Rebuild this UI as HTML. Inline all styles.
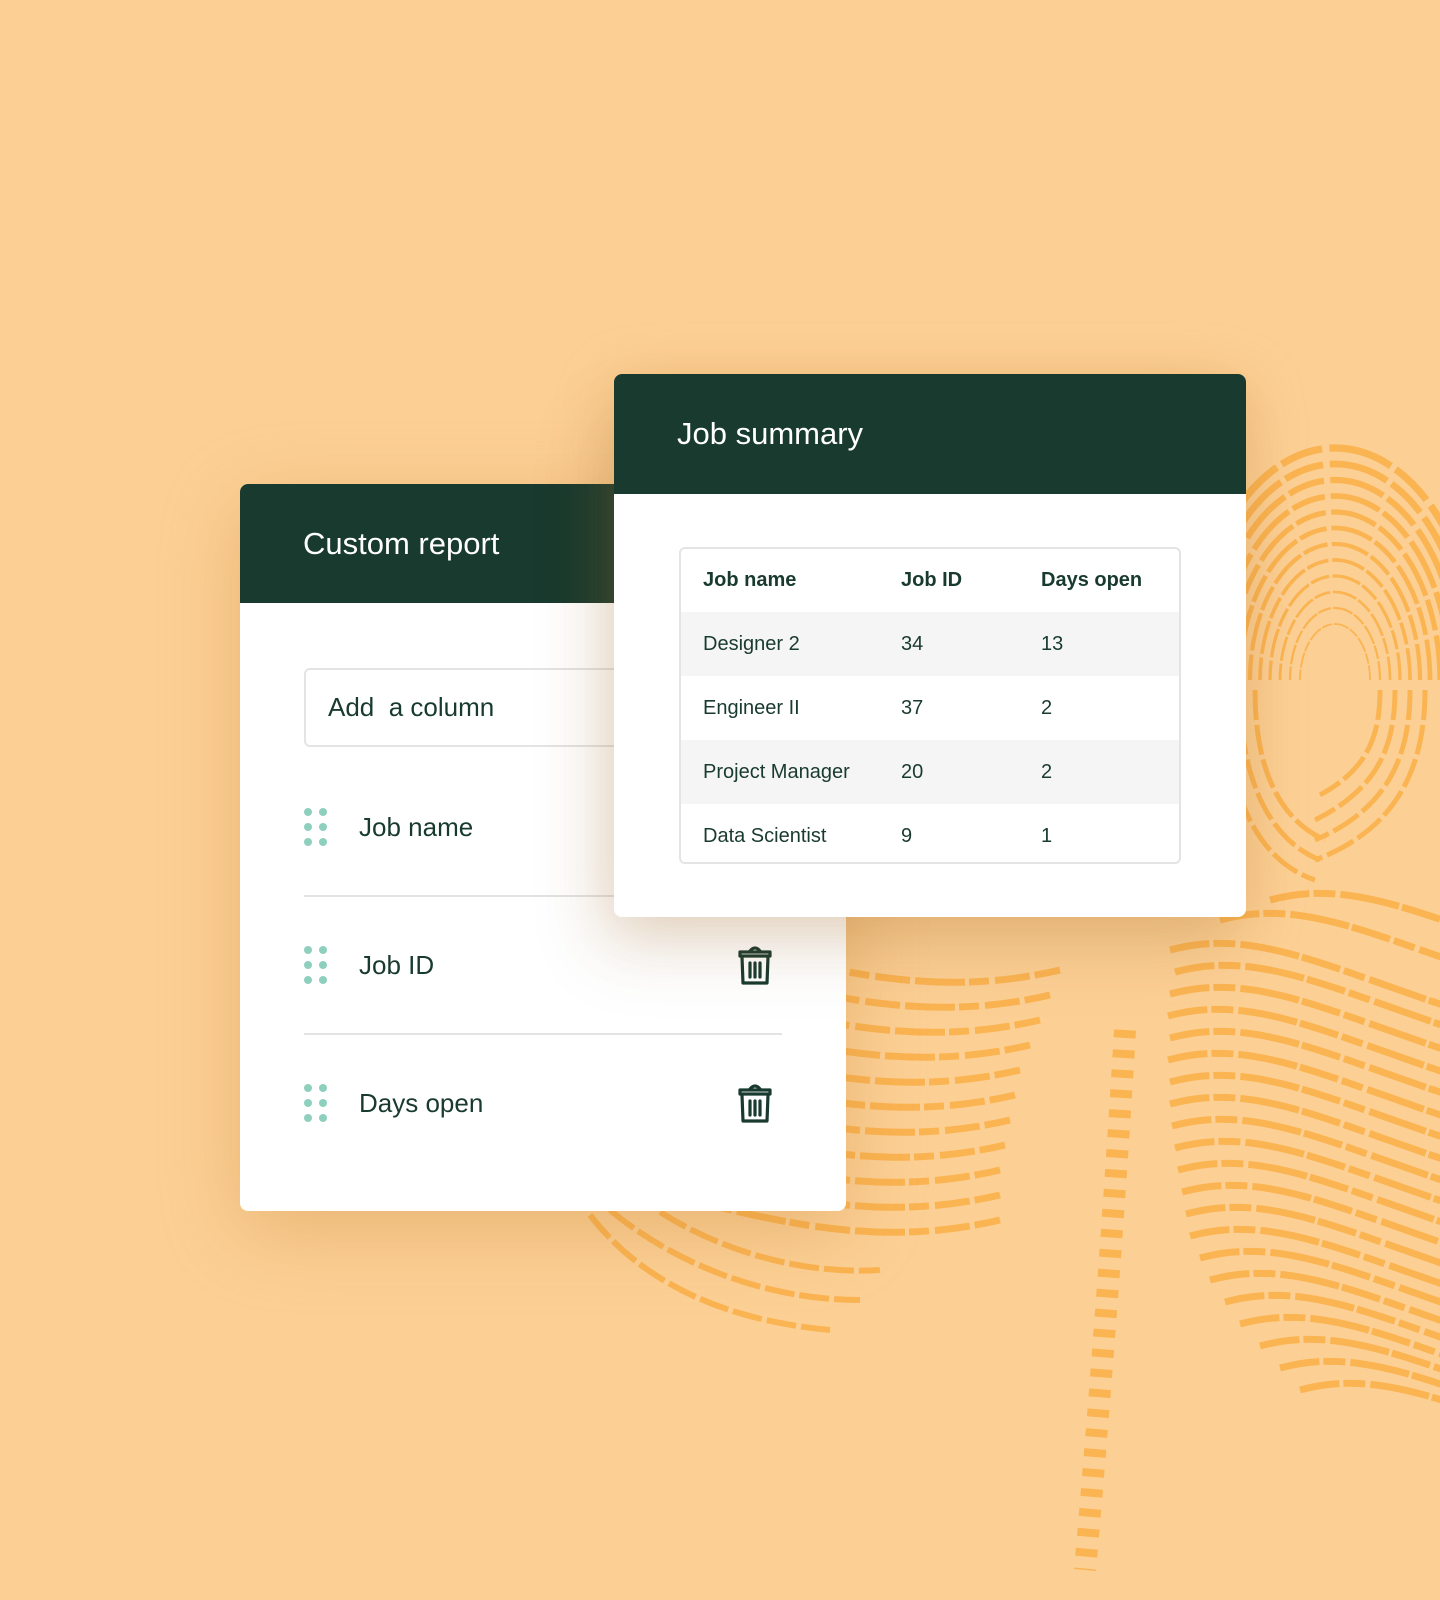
<!DOCTYPE html>
<html><head><meta charset="utf-8"><style>
*{margin:0;padding:0;box-sizing:border-box}
body{width:1440px;height:1600px;background:#FCD095;position:relative;overflow:hidden;font-family:"Liberation Sans",sans-serif;color:#193A2F}
svg.bg{position:absolute;left:0;top:0}
.card{position:absolute;background:#fff;border-radius:8px;overflow:hidden;box-shadow:0 20px 80px rgba(190,120,40,.3)}
.hdr{background:#193A2E;color:#fff;font-size:31px;position:relative}
.hdr span{position:absolute;left:63px;top:50%;transform:translateY(-50%)}
.dots{position:absolute;width:24px;height:40px}
.dots i{position:absolute;width:8px;height:8px;border-radius:50%;background:#8ED0BD}
.lbl{position:absolute;font-size:26px}
.div{position:absolute;height:2px;background:#e3e3e3}
table{border-collapse:collapse;width:100%}
td{height:64px;font-size:20px;padding-left:22px}
th{height:63px;font-size:20px;text-align:left;padding-left:22px;font-weight:bold}
tr.g td{background:#F4F5F4}
</style></head><body>
<svg class="bg" width="1440" height="1600" viewBox="0 0 1440 1600">
<defs>
<path id="w" d="M0,0 C90,-25 170,25 320,70" fill="none" stroke="#FBB452" stroke-width="7" stroke-dasharray="40 4 22 5 60 3"/>
<path id="l" d="M0,0 C120,10 250,80 420,40" fill="none" stroke="#FBB452" stroke-width="7" stroke-dasharray="35 5 50 4 20 6"/>
<path id="a" d="M-100,0 A100,160 0 0 1 100,0" fill="none" stroke="#FBB452" stroke-width="5" stroke-dasharray="30 5 45 4"/>
</defs>
<g>
<use href="#w" x="1170" y="950"/><use href="#w" x="1175" y="972"/><use href="#w" x="1170" y="994"/><use href="#w" x="1168" y="1016"/><use href="#w" x="1170" y="1038"/><use href="#w" x="1168" y="1060"/><use href="#w" x="1170" y="1082"/><use href="#w" x="1170" y="1104"/><use href="#w" x="1172" y="1126"/><use href="#w" x="1175" y="1148"/><use href="#w" x="1178" y="1170"/><use href="#w" x="1182" y="1192"/><use href="#w" x="1186" y="1214"/><use href="#w" x="1190" y="1236"/><use href="#w" x="1200" y="1258"/><use href="#w" x="1210" y="1280"/><use href="#w" x="1225" y="1302"/><use href="#w" x="1240" y="1324"/><use href="#w" x="1260" y="1346"/><use href="#w" x="1280" y="1368"/><use href="#w" x="1300" y="1390"/>
<use href="#w" x="1220" y="920"/><use href="#w" x="1270" y="900"/>
</g>
<g>
<use href="#l" x="640" y="930"/><use href="#l" x="630" y="955"/><use href="#l" x="620" y="980"/><use href="#l" x="610" y="1005"/><use href="#l" x="600" y="1030"/><use href="#l" x="595" y="1055"/><use href="#l" x="590" y="1080"/><use href="#l" x="585" y="1105"/><use href="#l" x="580" y="1130"/><use href="#l" x="580" y="1155"/><use href="#l" x="580" y="1180"/>
</g>
<g>
<path d="M590,1215 C640,1280 720,1320 830,1330" fill="none" stroke="#FBB452" stroke-width="6" stroke-dasharray="30 5"/>
<path d="M610,1210 C670,1260 760,1300 860,1300" fill="none" stroke="#FBB452" stroke-width="6" stroke-dasharray="30 5"/>
<path d="M660,1212 C720,1250 800,1275 880,1270" fill="none" stroke="#FBB452" stroke-width="6" stroke-dasharray="30 5"/>
</g>
<path d="M1125,1030 C1115,1200 1100,1400 1085,1570" fill="none" stroke="#FBB452" stroke-width="22" stroke-dasharray="8 12"/>
<g transform="translate(1335,680)">
<use href="#a" transform="scale(0.35)"/><use href="#a" transform="scale(0.45)"/><use href="#a" transform="scale(0.55)"/><use href="#a" transform="scale(0.65)"/><use href="#a" transform="scale(0.75)"/><use href="#a" transform="scale(0.85)"/><use href="#a" transform="scale(0.95)"/><use href="#a" transform="scale(1.05)"/><use href="#a" transform="scale(1.15)"/><use href="#a" transform="scale(1.25)"/><use href="#a" transform="scale(1.35)"/><use href="#a" transform="scale(1.45)"/>
<path d="M-110,10 C-110,110 -80,180 -20,200" fill="none" stroke="#FBB452" stroke-width="5" stroke-dasharray="30 5"/>
<path d="M-95,10 C-95,100 -65,160 -15,180" fill="none" stroke="#FBB452" stroke-width="5" stroke-dasharray="30 5"/>
<path d="M-80,10 C-80,90 -55,140 -10,160" fill="none" stroke="#FBB452" stroke-width="5" stroke-dasharray="30 5"/>
<path d="M90,10 C90,90 60,150 -20,180" fill="none" stroke="#FBB452" stroke-width="5" stroke-dasharray="30 5"/>
<path d="M75,10 C75,80 50,130 -20,160" fill="none" stroke="#FBB452" stroke-width="5" stroke-dasharray="30 5"/>
<path d="M60,10 C60,70 40,110 -20,140" fill="none" stroke="#FBB452" stroke-width="5" stroke-dasharray="30 5"/>
<path d="M45,10 C45,60 30,90 -15,115" fill="none" stroke="#FBB452" stroke-width="5" stroke-dasharray="30 5"/>
</g>
</svg>

<div class="card" style="left:240px;top:484px;width:606px;height:727px">
<div class="hdr" style="height:119px"><span>Custom report</span></div>
<div style="position:absolute;left:64px;top:184px;width:600px;height:79px;border:2px solid #e4e4e4;border-radius:6px"></div>
<div class="lbl" style="left:88px;top:208px">Add&nbsp; a column</div>
<div class="dots" style="left:64px;top:324px"><i style="left:0;top:0"></i><i style="left:15px;top:0"></i><i style="left:0;top:15px"></i><i style="left:15px;top:15px"></i><i style="left:0;top:30px"></i><i style="left:15px;top:30px"></i></div>
<div class="lbl" style="left:119px;top:328px">Job name</div>
<div class="div" style="left:64px;top:411px;width:478px"></div>
<div class="dots" style="left:64px;top:462px"><i style="left:0;top:0"></i><i style="left:15px;top:0"></i><i style="left:0;top:15px"></i><i style="left:15px;top:15px"></i><i style="left:0;top:30px"></i><i style="left:15px;top:30px"></i></div>
<div class="lbl" style="left:119px;top:466px">Job ID</div>
<div class="div" style="left:64px;top:549px;width:478px"></div>
<div class="dots" style="left:64px;top:600px"><i style="left:0;top:0"></i><i style="left:15px;top:0"></i><i style="left:0;top:15px"></i><i style="left:15px;top:15px"></i><i style="left:0;top:30px"></i><i style="left:15px;top:30px"></i></div>
<div class="lbl" style="left:119px;top:604px">Days open</div>
<svg style="position:absolute;left:497px;top:461px" width="36" height="42" viewBox="0 0 36 42"><g fill="none" stroke="#193A2F" stroke-width="3.2" stroke-linecap="round" stroke-linejoin="round"><path d="M13,6 Q18,0 23,6"/><path d="M3,7 H33 V11 H3 Z"/><path d="M5,12 L6,38 H30 L31,12"/><path d="M13,18 V32 M18,18 V32 M23,18 V32"/></g></svg>
<svg style="position:absolute;left:497px;top:599px" width="36" height="42" viewBox="0 0 36 42"><g fill="none" stroke="#193A2F" stroke-width="3.2" stroke-linecap="round" stroke-linejoin="round"><path d="M13,6 Q18,0 23,6"/><path d="M3,7 H33 V11 H3 Z"/><path d="M5,12 L6,38 H30 L31,12"/><path d="M13,18 V32 M18,18 V32 M23,18 V32"/></g></svg>
</div>

<div class="card" style="left:614px;top:374px;width:632px;height:543px;box-shadow:-20px 40px 70px rgba(120,90,50,.1),0 10px 60px rgba(190,120,40,.28)">
<div class="hdr" style="height:120px"><span style="top:42px;transform:none">Job summary</span></div>
<div style="position:absolute;left:65px;top:173px;width:502px;height:317px;border:2px solid #e4e4e4;border-radius:6px;overflow:hidden">
<table>
<colgroup><col style="width:198px"><col style="width:140px"><col></colgroup>
<tr><th>Job name</th><th>Job ID</th><th>Days open</th></tr>
<tr class="g"><td>Designer 2</td><td>34</td><td>13</td></tr>
<tr><td>Engineer II</td><td>37</td><td>2</td></tr>
<tr class="g"><td>Project Manager</td><td>20</td><td>2</td></tr>
<tr><td>Data Scientist</td><td>9</td><td>1</td></tr>
</table></div>
</div>
</body></html>
